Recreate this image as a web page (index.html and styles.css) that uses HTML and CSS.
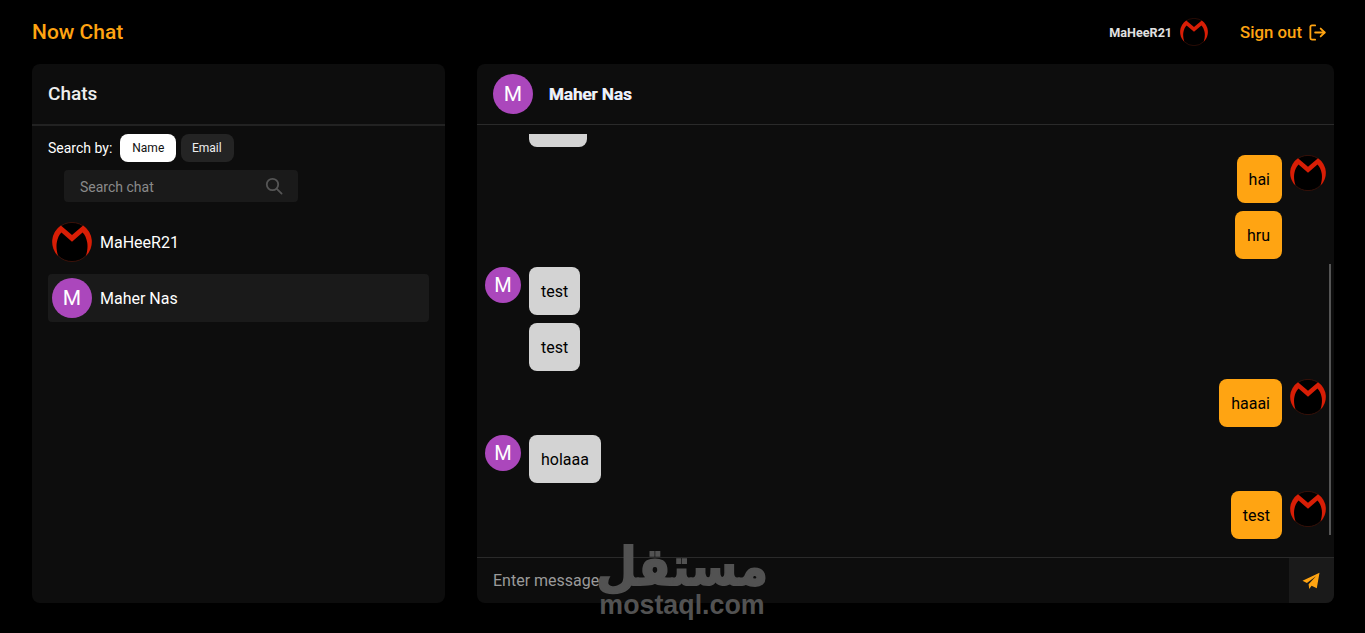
FILE: index.html
```html
<!DOCTYPE html>
<html lang="en">
<head>
    <meta charset="UTF-8">
    <meta name="viewport" content="width=device-width, initial-scale=1.0">
    <title>Now Chat</title>
    <link rel="stylesheet" href="styles.css">
</head>
<body>
    <svg class="defs" width="0" height="0">
        <defs>
            <symbol id="logo" viewBox="0 0 36 36">
                <circle cx="18" cy="18" r="17.6" fill="#000" stroke="#4a150a" stroke-width="0.7"/>
                <path fill="#d81e06" d="M8 3.2 L18 11.7 L28 3.2 A17.8 17.8 0 0 1 30.5 30.6 C32 26 32.3 21.5 31.6 18 C31 14.5 29.5 11.5 27.5 9.5 L18 17.7 L8.5 9.5 C6.5 11.5 5 14.5 4.4 18 C3.7 21.5 4 26 5.5 30.6 A17.8 17.8 0 0 1 8 3.2Z"/>
            </symbol>
        </defs>
    </svg>

    <header class="topbar">
        <div class="brand">Now Chat</div>
        <div class="account">
            <span class="account-name">MaHeeR21</span>
            <svg class="logo logo-small"><use href="#logo"/></svg>
            <a class="signout" href="#">Sign out
                <svg width="19" height="19" viewBox="0 0 24 24" fill="none" stroke="currentColor" stroke-width="2.3" stroke-linecap="round" stroke-linejoin="round">
                    <path d="M9 3H5a2 2 0 0 0-2 2v14a2 2 0 0 0 2 2h4"/>
                    <path d="M9 12h12"/>
                    <path d="M16 7l5 5-5 5"/>
                </svg>
            </a>
        </div>
    </header>

    <main class="layout">
        <section class="panel sidebar">
            <h2 class="sidebar-title">Chats</h2>
            <div class="search-by">
                <span>Search by:</span>
                <button class="pill active">Name</button>
                <button class="pill">Email</button>
            </div>
            <div class="search-box">
                <span>Search chat</span>
                <svg width="18" height="18" viewBox="0 0 18 18" fill="none" stroke="#555" stroke-width="1.8" stroke-linecap="round">
                    <circle cx="7.5" cy="7.5" r="5.7"/>
                    <path d="M11.8 11.8L16.6 16.6"/>
                </svg>
            </div>
            <ul class="chat-list">
                <li class="chat-item">
                    <svg class="logo logo-list"><use href="#logo"/></svg>
                    <span>MaHeeR21</span>
                </li>
                <li class="chat-item selected">
                    <div class="letter letter-list">M</div>
                    <span>Maher Nas</span>
                </li>
            </ul>
        </section>

        <section class="panel chat">
            <div class="chat-head">
                <div class="letter letter-list">M</div>
                <span class="chat-name">Maher Nas</span>
            </div>
            <div class="messages">
                <div class="msg in clipped">
                    <div class="avatar-slot"></div>
                    <div class="bubble bubble-cut"></div>
                </div>
                <div class="msg out">
                    <div class="bubble">hai</div>
                    <svg class="logo avatar-slot"><use href="#logo"/></svg>
                </div>
                <div class="msg out">
                    <div class="bubble">hru</div>
                    <div class="avatar-slot"></div>
                </div>
                <div class="msg in">
                    <div class="letter avatar-slot">M</div>
                    <div class="bubble">test</div>
                </div>
                <div class="msg in">
                    <div class="avatar-slot"></div>
                    <div class="bubble">test</div>
                </div>
                <div class="msg out">
                    <div class="bubble">haaai</div>
                    <svg class="logo avatar-slot"><use href="#logo"/></svg>
                </div>
                <div class="msg in">
                    <div class="letter avatar-slot">M</div>
                    <div class="bubble">holaaa</div>
                </div>
                <div class="msg out">
                    <div class="bubble">test</div>
                    <svg class="logo avatar-slot"><use href="#logo"/></svg>
                </div>
                <div class="scrollbar"></div>
            </div>
            <div class="composer">
                <div class="composer-input">Enter message</div>
                <button class="send">
                    <svg width="18" height="18" viewBox="0 0 18 18" fill="#ffa412">
                        <path d="M17.5 0.8L14.8 16.2 9.6 13.7 7.2 17 6.6 12.3 14 4.2 4.9 11 0.5 8.8Z"/>
                    </svg>
                </button>
            </div>
        </section>
    </main>

    <div class="watermark">
        <div class="watermark-ar" lang="ar" dir="rtl">مستقل</div>
        <div class="watermark-en">mostaql.com</div>
    </div>
</body>
</html>
```

FILE: styles.css
```css
* {
    box-sizing: border-box;
}
html, body {
    height: 100%;
}
body {
    margin: 0;
    height: 633px;
    overflow: hidden;
    background-color: #000;
    color: #fff;
    font-family: Roboto, "Liberation Sans", sans-serif;
    position: relative;
}
.defs {
    position: absolute;
}
.topbar {
    height: 64px;
    padding: 0 32px;
    display: flex;
    align-items: center;
    justify-content: space-between;
}
.brand {
    color: #ffa412;
    font-size: 21px;
    font-weight: 500;
}
.account {
    display: flex;
    align-items: center;
}
.account-name {
    font-size: 12.6px;
    font-weight: 700;
    color: #e0e0e0;
}
.logo {
    display: block;
    flex-shrink: 0;
}
.logo-small {
    width: 28px;
    height: 28px;
    margin: 0 32px 0 8px;
}
.signout {
    color: #ffa412;
    font-size: 16.8px;
    font-weight: 500;
    text-decoration: none;
    display: flex;
    align-items: center;
    gap: 6px;
    margin-right: 6px;
}
.layout {
    display: flex;
    gap: 32px;
    padding: 0 31px 0 32px;
    height: 539px;
}
.panel {
    background-color: #0d0d0d;
    border-radius: 8px;
    overflow: hidden;
}
.sidebar {
    width: 413px;
    flex-shrink: 0;
}
.sidebar-title {
    margin: 0;
    height: 62px;
    padding: 0 16px 2px;
    display: flex;
    align-items: center;
    font-size: 19px;
    font-weight: 500;
    color: #eee;
    border-bottom: 2px solid #222;
}
.search-by {
    display: flex;
    align-items: center;
    gap: 5px;
    padding: 8px 16px 0;
    font-size: 14px;
}
.search-by span {
    margin-right: 3px;
}
.pill {
    height: 28px;
    width: 53px;
    padding: 0 2px 0 0;
    border: none;
    border-radius: 8px;
    background-color: #242424;
    color: #eee;
    font-family: inherit;
    font-size: 12px;
}
.pill.active {
    background-color: #fff;
    color: #111;
    width: 56px;
    padding: 0;
}
.search-box {
    width: 234px;
    height: 32px;
    margin: 8px 0 0 32px;
    padding: 2px 15px 0 16px;
    display: flex;
    align-items: center;
    justify-content: space-between;
    background-color: #1a1a1a;
    border-radius: 4px;
    font-size: 14px;
    color: #8a8a8a;
}
.search-box svg {
    margin-top: -2px;
}
.chat-list {
    list-style: none;
    margin: 16px 16px 0;
    padding: 0;
    display: flex;
    flex-direction: column;
    gap: 8px;
}
.chat-item {
    height: 48px;
    padding: 0 4px;
    display: flex;
    align-items: center;
    gap: 8px;
    font-size: 16px;
    border-radius: 4px;
}
.chat-item.selected {
    background-color: #1a1a1a;
}
.logo-list {
    width: 40px;
    height: 40px;
}
.letter {
    border-radius: 50%;
    background-color: #ab47bc;
    color: #fff;
    display: flex;
    align-items: center;
    justify-content: center;
}
.letter-list {
    width: 40px;
    height: 40px;
    font-size: 21px;
    flex-shrink: 0;
}
.chat {
    flex: 1;
    display: flex;
    flex-direction: column;
}
.chat-head {
    height: 61px;
    flex-shrink: 0;
    padding: 0 16px;
    display: flex;
    align-items: center;
    gap: 16px;
    border-bottom: 1px solid #2a2a2a;
}
.chat-name {
    font-size: 17px;
    font-weight: 500;
    color: #eef2f8;
    text-shadow: -0.4px 0 #8fbcff, 0.4px 0 #ffcf9a;
}
.messages {
    position: relative;
    margin-top: 9px;
    height: 423px;
    overflow: hidden;
    display: flex;
    flex-direction: column;
    gap: 8px;
    padding: 0 8px;
}
.msg {
    display: flex;
    gap: 8px;
    flex-shrink: 0;
}
.msg.out {
    justify-content: flex-end;
}
.msg.clipped {
    margin-top: -35px;
}
.avatar-slot {
    width: 36px;
    height: 36px;
    flex-shrink: 0;
    font-size: 20px;
}
.bubble {
    height: 48px;
    padding: 0 12px;
    display: flex;
    align-items: center;
    border-radius: 8px;
    font-size: 16px;
    background-color: #d3d3d3;
    color: #000;
}
.bubble-cut {
    width: 58px;
}
.out .bubble {
    background-color: #ffa412;
}
.scrollbar {
    position: absolute;
    right: 3px;
    top: 130px;
    width: 2px;
    height: 271px;
    background-color: #555;
}
.composer {
    height: 46px;
    margin-top: 10px;
    flex-shrink: 0;
    display: flex;
    border-top: 1px solid #2a2a2a;
}
.composer-input {
    flex: 1;
    padding: 0 16px;
    display: flex;
    align-items: center;
    font-size: 16px;
    color: #9a9a9a;
}
.send {
    width: 45px;
    border: none;
    padding: 0 2px 0 0;
    background-color: #1a1a1a;
    display: flex;
    align-items: center;
    justify-content: center;
}
.watermark {
    position: absolute;
    left: 599px;
    top: 545px;
    width: 166px;
    text-align: center;
    color: #525252;
    pointer-events: none;
}
.watermark-ar {
    font-family: "DejaVu Sans", sans-serif;
    font-size: 47px;
    font-weight: 700;
    line-height: 44px;
    margin-bottom: 3px;
    -webkit-text-stroke: 1.6px #525252;
    transform: translateX(3px) scale(1, 1.12);
}
.watermark-en {
    font-family: "Liberation Sans", sans-serif;
    font-size: 26.8px;
    font-weight: 700;
    line-height: 27px;
}
```
